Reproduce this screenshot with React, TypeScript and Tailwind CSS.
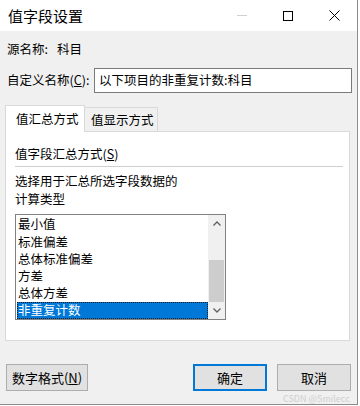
import React from "react";

const items = ["最小值", "标准偏差", "总体标准偏差", "方差", "总体方差", "非重复计数"];

const font = { fontFamily: '"Noto Sans CJK SC", "Liberation Sans", sans-serif' };

function WinButton({ children, className = "" }: { children: React.ReactNode; className?: string }) {
  return (
    <button
      className={
        "h-[27px] flex items-center justify-center bg-[#e1e1e1] text-[13px] text-black leading-none " +
        className
      }
    >
      {children}
    </button>
  );
}

export default function App() {
  return (
    <div className="w-[360px] h-[406px] bg-white overflow-hidden relative" style={font}>
      <div className="w-[358px] h-[405px] flex flex-col bg-[#f0f0f0] border-r border-b border-[#8c8c8c] text-black">
        {/* title bar */}
        <div className="h-[31px] shrink-0 bg-white flex items-center pl-[8px]">
          <span className="text-[15px] leading-none">值字段设置</span>
          <div className="ml-auto flex items-center h-full">
            <div className="w-[46px] h-full flex items-center justify-center">
              <div className="w-[10px] h-px bg-[#d0d0d0]" />
            </div>
            <div className="w-[46px] h-full flex items-center justify-center">
              <div className="w-[10px] h-[10px] border border-black" />
            </div>
            <div className="w-[46px] h-full flex items-center justify-center">
              <svg width="11" height="11" viewBox="0 0 11 11">
                <path d="M0.5 0.5 L10.5 10.5 M10.5 0.5 L0.5 10.5" stroke="#000" strokeWidth="1" />
              </svg>
            </div>
          </div>
        </div>

        {/* source name */}
        <div className="mt-[10px] pl-[7px] h-[16px] flex items-center text-[12.5px] leading-none">
          <span>源名称:</span>
          <span className="ml-[9px]">科目</span>
        </div>

        {/* custom name */}
        <div className="mt-[11px] flex items-center pl-[7px]">
          <span className="text-[12.5px] leading-none w-[87px]">
            自定义名称(<span className="underline">C</span>):
          </span>
          <div className="w-[258px] h-[25px] bg-white border border-[#7a7a7a] flex items-center pl-[4px] text-[12.5px] leading-none">
            以下项目的非重复计数:科目
          </div>
        </div>

        {/* tabs */}
        <div className="mt-[12px] pl-[5px] flex items-end h-[27px]">
          <div className="w-[80px] h-[27px] bg-white border border-b-0 border-[#d9d9d9] flex items-center pl-[10px] text-[12.5px] leading-none relative z-10">
            值汇总方式
          </div>
          <div className="w-[73px] h-[25px] bg-[#f0f0f0] border border-l-0 border-b-0 border-[#d9d9d9] flex items-center pl-[6px] text-[12.5px] leading-none">
            值显示方式
          </div>
        </div>

        {/* panel */}
        <div className="ml-[5px] w-[345px] h-[210px] bg-white border border-[#d9d9d9] -mt-px pt-[13px] px-[9px]">
          <div className="h-[18px] flex items-center text-[12.5px] leading-none">
            值字段汇总方式(<span className="underline">S</span>)
          </div>
          <div className="mt-[3px] h-px w-[328px] bg-[#cfcfcf]" />
          <div className="mt-[6px] h-[17px] flex items-center text-[12.5px] leading-none">选择用于汇总所选字段数据的</div>
          <div className="mt-[1px] h-[17px] flex items-center text-[12.5px] leading-none">计算类型</div>

          {/* list box */}
          <div className="mt-[6px] w-[211px] h-[106px] border border-[#828282] flex">
            <div className="flex-1 flex flex-col pl-px pt-px">
              {items.map((it, i) => (
                <div
                  key={it}
                  className={
                    "h-[17.3px] flex items-center pl-[1px] text-[12.5px] leading-none " +
                    (i === items.length - 1
                      ? "bg-[#0078d7] text-white outline outline-1 outline-dotted outline-[#1a1a1a] -outline-offset-1"
                      : "")
                  }
                >
                  {it}
                </div>
              ))}
            </div>
            <div className="w-[17px] bg-[#f0f0f0] flex flex-col">
              <div className="h-[17px] flex items-center justify-center">
                <svg width="8" height="5" viewBox="0 0 8 5">
                  <path d="M0.5 4.5 L4 1 L7.5 4.5" stroke="#606060" strokeWidth="1.3" fill="none" />
                </svg>
              </div>
              <div className="h-[28px]" />
              <div className="h-[42px] mx-px bg-[#cdcdcd]" />
              <div className="flex-1 flex items-center justify-center">
                <svg width="8" height="5" viewBox="0 0 8 5">
                  <path d="M0.5 0.5 L4 4 L7.5 0.5" stroke="#606060" strokeWidth="1.3" fill="none" />
                </svg>
              </div>
            </div>
          </div>
        </div>

        {/* buttons */}
        <div className="mt-[23px] flex items-center pl-[6px]">
          <WinButton className="w-[82px] border border-[#adadad]">
            数字格式(<span className="underline">N</span>)
          </WinButton>
          <WinButton className="ml-[105px] w-[74px] border-2 border-[#0078d7]">确定</WinButton>
          <WinButton className="ml-[10px] w-[74px] border border-[#adadad]">取消</WinButton>
        </div>
      </div>
      <div className="absolute left-[283px] top-[394px] text-[9px] leading-none text-[#cfcfcf] whitespace-nowrap">
        CSDN @Smilecc
      </div>
    </div>
  );
}
